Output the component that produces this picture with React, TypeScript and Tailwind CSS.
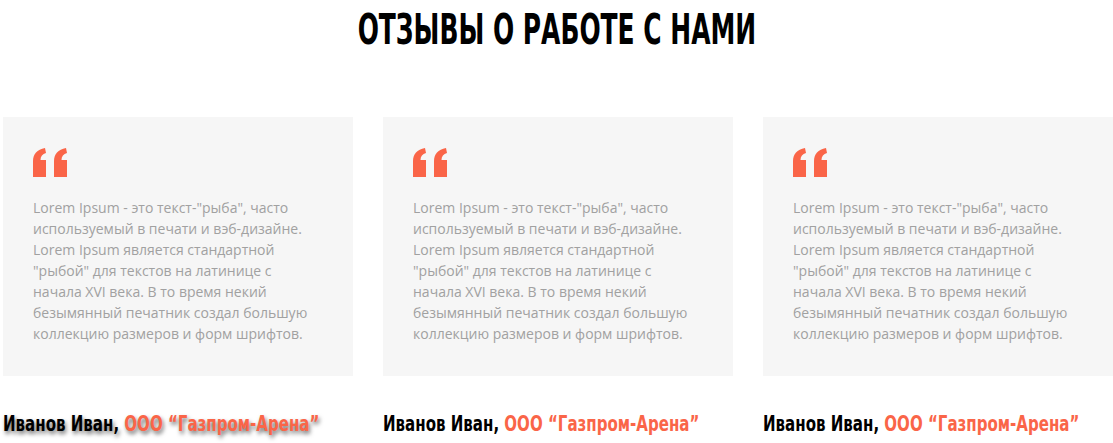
const reviews = [
  { name: 'Иванов Иван', company: 'ООО “Газпром-Арена”', shadow: true },
  { name: 'Иванов Иван', company: 'ООО “Газпром-Арена”', shadow: false },
  { name: 'Иванов Иван', company: 'ООО “Газпром-Арена”', shadow: false },
]

const text =
  'Lorem Ipsum - это текст-"рыба", часто используемый в печати и вэб-дизайне. Lorem Ipsum является стандартной "рыбой" для текстов на латинице с начала XVI века. В то время некий безымянный печатник создал большую коллекцию размеров и форм шрифтов.'

// condensed display face stand-in (no Oswald offline)
const display = { fontFamily: '"DejaVu Sans Condensed", "Liberation Sans", sans-serif' }

function QuoteMark() {
  return (
    <svg width="35" height="29" viewBox="0 0 35 29" fill="#fa6548" aria-hidden>
      <path d="M0 29V13C0 6 4 1.5 12 0L13 5C9.5 6 7.5 8.5 7.5 12H13V29Z" />
      <path d="M21 29V13C21 6 25 1.5 33 0L34 5C30.5 6 28.5 8.5 28.5 12H34V29Z" />
    </svg>
  )
}

export default function App() {
  return (
    <section className="w-[1113px] overflow-hidden bg-white pb-6">
      <div className="pt-[6px] text-center">
        <h1
          className="inline-block scale-x-[0.66] whitespace-nowrap text-[42px] font-bold leading-[48px] text-black"
          style={display}
        >
          ОТЗЫВЫ О РАБОТЕ С НАМИ
        </h1>
      </div>

      <div className="mt-[63px] grid grid-cols-3 gap-[30px] pl-[3px]">
        {reviews.map((r, i) => (
          <div key={i}>
            <div className="h-[259px] bg-[#f6f6f6] px-[30px] pt-[31px]">
              <QuoteMark />
              <p
                className="mt-[20px] text-[14px] leading-[21px] text-[#a1a1a1]"
                style={{ fontFamily: '"Open Sans", sans-serif' }}
              >
                {text}
              </p>
            </div>
            <p
              className={
                'mt-[33px] origin-left scale-x-[0.76] whitespace-nowrap text-[22px] font-bold leading-[30px] text-black ' +
                (r.shadow ? '[text-shadow:2px_3px_5px_rgba(0,0,0,0.55)]' : '')
              }
              style={display}
            >
              {r.name}, <span className="text-[#fa6548]">{r.company}</span>
            </p>
          </div>
        ))}
      </div>
    </section>
  )
}
